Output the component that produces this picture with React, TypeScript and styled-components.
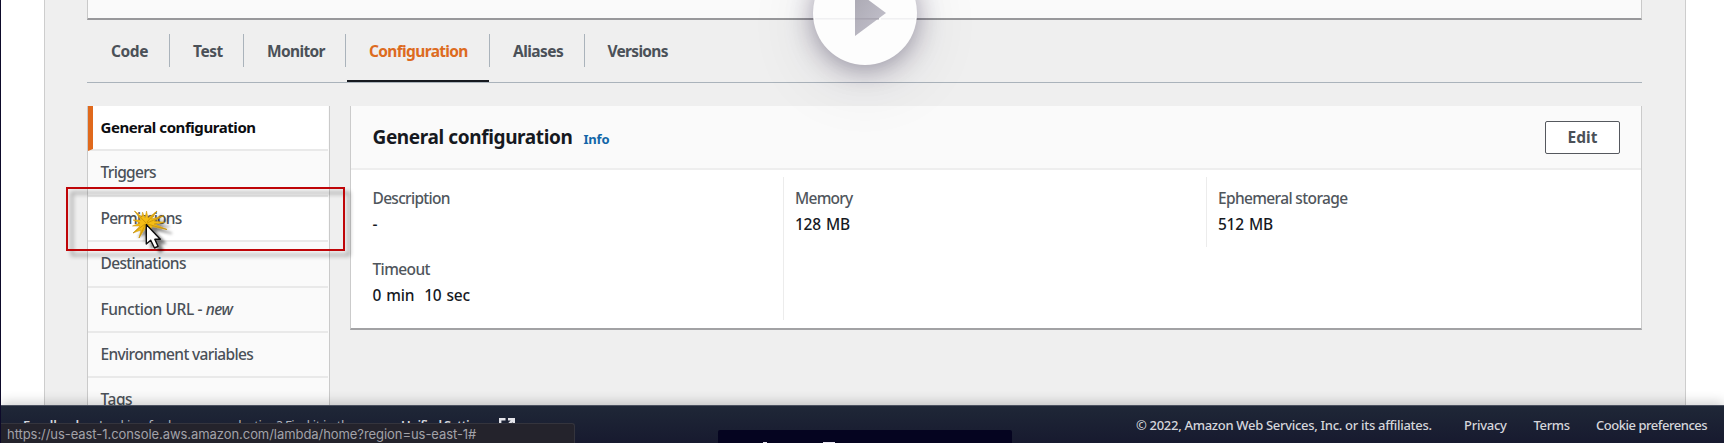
import React from 'react';
import styled, { createGlobalStyle } from 'styled-components';

const Global = createGlobalStyle`
  *, *::before, *::after { box-sizing: border-box; }
  body { margin: 0; background: #fff; font-family: "Noto Sans", sans-serif; overflow: hidden; }
  button { font-family: inherit; }
`;

const Page = styled.div`
  position: relative;
  width: 1724px;
  height: 443px;
  overflow: hidden;
  padding: 0 38px 0 43px;
  border-left: 1px solid #0d0a2a;
  background: #fff;
  color: #16191f;
  font-size: 15.5px;
`;

const Content = styled.main`
  height: 443px;
  padding: 0 43px 0 42px;
  border: solid #cdcdcd;
  border-width: 0 1px;
  background: #efefef;
`;

const OverviewCard = styled.section`
  height: 20px;
  border: solid #c9c9c9;
  border-width: 0 1px 2px;
  border-bottom-color: #98989b;
  background: #fafafa;
`;

const Tabs = styled.nav`
  display: flex;
  height: 63px;
  padding: 14px 0 0 1px;
  border-bottom: 1px solid #aab3bb;
`;

const Tab = styled.a<{ $width: number; $tracking: number; $active?: boolean; $last?: boolean }>`
  position: relative;
  width: ${(p) => p.$width}px;
  height: 33px;
  padding-left: 23px;
  border-right: ${(p) => (p.$last ? 'none' : '1px solid #aab3bb')};
  color: ${(p) => (p.$active ? '#dd6b20' : '#4b5158')};
  font-weight: 700;
  line-height: 35px;
  letter-spacing: ${(p) => p.$tracking}px;
  white-space: nowrap;

  &::after {
    content: '';
    display: ${(p) => (p.$active ? 'block' : 'none')};
    position: absolute;
    left: 1px;
    right: 0;
    bottom: -15px;
    height: 2px;
    background: #16191f;
  }
`;

const Columns = styled.div`
  display: flex;
  align-items: flex-start;
  gap: 20px;
  margin-top: 23px;
`;

const SideNav = styled.nav`
  width: 243px;
  height: 340px;
  border: solid #cacaca;
  border-width: 0 1px;
  background: #fafafa;
`;

const NavItem = styled.a<{ $tracking: number; $active?: boolean; $hovered?: boolean }>`
  display: block;
  height: 45.4px;
  margin-right: 1px;
  padding-left: ${(p) => (p.$active ? 7.5 : 12.5)}px;
  border-left: ${(p) => (p.$active ? '5px solid #e0691c' : '0')};
  border-bottom: 2px solid #e9e9e9;
  background: ${(p) => (p.$active || p.$hovered ? '#fff' : '#fafafa')};
  color: ${(p) => (p.$active ? '#0c0d10' : '#4b5158')};
  font-size: ${(p) => (p.$active ? 15 : 15.5)}px;
  font-weight: ${(p) => (p.$active ? 700 : 500)};
  line-height: 43.6px;
  letter-spacing: ${(p) => p.$tracking}px;
  white-space: pre;
`;

const Panel = styled.section`
  flex: 1;
  height: 224px;
  border: solid #cbcbcb;
  border-width: 0 1px 2px;
  border-bottom-color: #a2a2a4;
  background: #fff;
`;

const PanelHeader = styled.header`
  display: flex;
  align-items: center;
  height: 64px;
  padding: 0 21px 0 21.5px;
  border-bottom: 2px solid #eee;
  background: #fafafa;
`;

const Title = styled.h2`
  margin: 0;
  font-size: 19px;
  font-weight: 700;
  line-height: 28px;
  letter-spacing: -0.38px;
`;

const InfoLink = styled.a`
  margin: 4px auto 0 11px;
  color: #1166a8;
  font-size: 13px;
  font-weight: 700;
  letter-spacing: -0.2px;
`;

const EditButton = styled.button`
  width: 75px;
  height: 33px;
  padding: 0;
  border: 1px solid #55585e;
  border-radius: 2px;
  background: #fff;
  color: #4b5158;
  font-size: 15.5px;
  font-weight: 700;
  line-height: 29px;
`;

const Details = styled.div`
  display: grid;
  grid-template-columns: 432px 423px 1fr;
  padding-top: 7px;
`;

const DetailColumn = styled.dl<{ $tall?: boolean; $divided?: boolean }>`
  height: ${(p) => (p.$tall ? 143 : 70)}px;
  margin: 0;
  padding: 9px 0 0 ${(p) => (p.$divided ? 11 : 21.5)}px;
  border-left: ${(p) => (p.$divided ? '1px solid #ececec' : '0')};
  font-weight: 500;
`;

const Label = styled.dt<{ $tracking: number }>`
  color: #50565c;
  line-height: 24px;
  letter-spacing: ${(p) => p.$tracking}px;
`;

const Value = styled.dd`
  display: flex;
  gap: 10px;
  margin: 2px 0 21px;
  line-height: 24px;
  letter-spacing: -0.25px;
  word-spacing: 1.4px;
`;

const Footer = styled.footer`
  position: absolute;
  inset: 405px 0 0 0;
  display: flex;
  padding: 10px 17px 0 22px;
  border-top: 1px solid #4b5160;
  background: linear-gradient(#1f2737, #171a2f);
  box-shadow: 0 -3px 12px rgba(0, 0, 0, 0.18);
  color: #d5d6db;
  font-size: 13px;
  line-height: 19px;
  white-space: nowrap;
`;

const Feedback = styled.span`
  width: 76px;
  font-weight: 600;
`;

const Hint = styled.span`
  width: 302px;
  color: #b0b2bb;
  letter-spacing: -0.36px;
`;

const SettingsLink = styled.span`
  display: flex;
  width: 114px;
  justify-content: space-between;
  font-weight: 600;
  letter-spacing: -0.8px;
`;

const ExternalIcon = styled.svg`
  margin-top: 2px;
`;

const Legal = styled.div`
  display: flex;
  margin-left: auto;
  font-weight: 500;
`;

const LegalItem = styled.span<{ $width: number; $tracking: number }>`
  width: ${(p) => p.$width}px;
  letter-spacing: ${(p) => p.$tracking}px;
`;

const StatusBubble = styled.div`
  position: absolute;
  left: 0;
  top: 423px;
  width: 574px;
  height: 20px;
  padding-left: 6px;
  border: solid #34343d;
  border-width: 1px 1px 0 0;
  border-radius: 0 3px 0 0;
  background: #24232c;
  color: #a2a2a9;
  font-family: Inter, sans-serif;
  font-size: 13px;
  line-height: 21px;
  letter-spacing: -0.06px;
`;

const Caption = styled.div`
  position: absolute;
  left: 717px;
  top: 430px;
  width: 294px;
  height: 13px;
  padding: 11px 0 0 44px;
  border-radius: 2px 2px 0 0;
  background: #050420;
  overflow: hidden;

  svg { display: block; }
`;

const Highlight = styled.div`
  position: absolute;
  left: 65px;
  top: 187px;
  width: 279px;
  height: 64px;
  border: 2px solid #bf0508;
  filter: drop-shadow(5px 5px 2px rgba(0, 0, 0, 0.38));
`;

const Pointer = styled.svg`
  position: absolute;
  left: 129px;
  top: 206px;
  overflow: visible;
`;

const PlayButton = styled.button`
  position: absolute;
  left: 812px;
  top: -39px;
  display: flex;
  width: 104px;
  height: 104px;
  padding: 0;
  border: 0;
  border-radius: 50%;
  background: #fdfdfd;
  box-shadow: 0 4px 26px rgba(30, 20, 55, 0.38), 0 12px 70px rgba(30, 20, 55, 0.12);
`;

const tabs = [
  { label: 'Code', width: 82, tracking: -0.4 },
  { label: 'Test', width: 74, tracking: -0.45 },
  { label: 'Monitor', width: 102, tracking: -0.65 },
  { label: 'Configuration', width: 144, tracking: -0.65, active: true },
  { label: 'Aliases', width: 94.5, tracking: -0.56 },
  { label: 'Versions', width: 100, tracking: -0.7, last: true },
];

export default function App() {
  return (
    <Page>
      <Global />
      <Content>
        <OverviewCard />
        <Tabs>
          {tabs.map((t) => (
            <Tab key={t.label} $width={t.width} $tracking={t.tracking} $active={t.active} $last={t.last}>
              {t.label}
            </Tab>
          ))}
        </Tabs>
        <Columns>
          <SideNav>
            <NavItem $active $tracking={-0.43}>General configuration</NavItem>
            <NavItem $tracking={-0.68}>Triggers</NavItem>
            <NavItem $hovered $tracking={-0.8}>Permissions</NavItem>
            <NavItem $tracking={-0.67}>Destinations</NavItem>
            <NavItem $tracking={-0.4}>Function URL - <em>new</em></NavItem>
            <NavItem $tracking={-0.65}>Environment variables</NavItem>
            <NavItem $tracking={-0.45}>Tags</NavItem>
          </SideNav>
          <Panel>
            <PanelHeader>
              <Title>General configuration</Title>
              <InfoLink>Info</InfoLink>
              <EditButton>Edit</EditButton>
            </PanelHeader>
            <Details>
              <DetailColumn $tall>
                <Label $tracking={-0.7}>Description</Label>
                <Value>-</Value>
                <Label $tracking={-0.6}>Timeout</Label>
                <Value><span>0 min</span><span>10 sec</span></Value>
              </DetailColumn>
              <DetailColumn $tall $divided>
                <Label $tracking={-0.75}>Memory</Label>
                <Value>128 MB</Value>
              </DetailColumn>
              <DetailColumn $divided>
                <Label $tracking={-0.64}>Ephemeral storage</Label>
                <Value>512 MB</Value>
              </DetailColumn>
            </Details>
          </Panel>
        </Columns>
      </Content>

      <Footer>
        <Feedback>Feedback</Feedback>
        <Hint>Looking for language selection? Find it in the new</Hint>
        <SettingsLink>
          Unified Settings
          <ExternalIcon width="16" height="16" viewBox="0 0 16 16" fill="none" stroke="#e4e4ea" strokeWidth="2.4">
            <path d="M6.5 1.2H1.2V14.8H14.8V9.5M9 1.2h5.8V7M14.8 1.2L7 9" />
          </ExternalIcon>
        </SettingsLink>
        <Legal>
          <LegalItem $width={328} $tracking={-0.3}>© 2022, Amazon Web Services, Inc. or its affiliates.</LegalItem>
          <LegalItem $width={69.5} $tracking={-0.25}>Privacy</LegalItem>
          <LegalItem $width={62.5} $tracking={-0.35}>Terms</LegalItem>
          <LegalItem $width={111} $tracking={-0.47}>Cookie preferences</LegalItem>
        </Legal>
      </Footer>
      <StatusBubble>https://us-east-1.console.aws.amazon.com/lambda/home?region=us-east-1#</StatusBubble>
      <Caption>
        <svg width="80" height="4" viewBox="0 0 80 4" fill="#e9e6f2">
          <path d="M1 1h4v3H1zM61 1h12v3H61z" />
        </svg>
      </Caption>

      <Highlight />
      <Pointer width="44" height="48" viewBox="0 0 44 48">
        <defs>
          <filter id="cursorShadow" x="-50%" y="-50%" width="220%" height="220%">
            <feDropShadow dx="5" dy="4" stdDeviation="1.8" floodColor="#000" floodOpacity="0.5" />
          </filter>
        </defs>
        <g filter="url(#cursorShadow)">
          <path
            fill="#f4bd12"
            stroke="#c9930a"
            strokeWidth="0.5"
            d="M4.5 5L12 11L12.5 6L15 12L16.5 5L18 12L27 5L21.5 13L34 9.5L24 15L35 16.5L24 18L37 23.5L22 20.5L20 26L16 21L9 32L11 24L3 27L10 20L2.5 20L10 17L3 14L11 14Z"
          />
          <path
            stroke="#b98406"
            strokeWidth="0.6"
            fill="none"
            d="M4.5 5L16 17M27 5L17 16M34 9.5L17 17M9 32L15 19M3 27L15 18M37 23.5L17 18"
          />
          <path
            fill="#fff"
            stroke="#0b0b0b"
            strokeWidth="1.4"
            strokeLinejoin="round"
            d="M16.3 18.5V38L20.7 34.3L24.5 42L28 40.3L24.8 33.3H30.3Z"
          />
        </g>
      </Pointer>

      <PlayButton aria-label="Play">
        <svg width="104" height="104" viewBox="0 0 104 104">
          <defs>
            <linearGradient id="playShade" x1="0" y1="0" x2="1" y2="1">
              <stop offset="0" stopColor="#aaa8b2" />
              <stop offset="1" stopColor="#c5c3ce" />
            </linearGradient>
          </defs>
          <path d="M42 29L73 52L42 75Z" fill="url(#playShade)" />
          <path d="M2 57.8H42M68 57.8H102" stroke="#f0f0f2" strokeWidth="1.5" />
          <path d="M42 57.8H66" stroke="#a8a5b0" strokeWidth="1.5" />
        </svg>
      </PlayButton>
    </Page>
  );
}
